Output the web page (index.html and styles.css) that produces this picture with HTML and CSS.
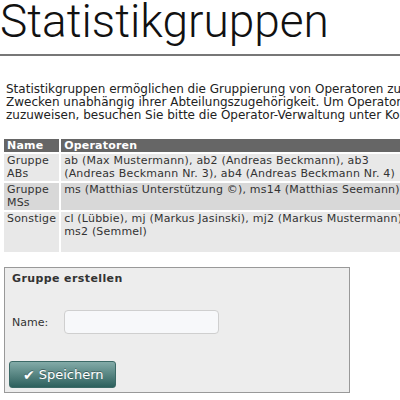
FILE: index.html
```html
<!DOCTYPE html>
<html lang="de">
<head>
    <meta charset="UTF-8">
    <title>Statistikgruppen</title>
    <link rel="stylesheet" href="styles.css">
</head>
<body>
    <h1 class="page-title">Statistikgruppen</h1>
    <div class="content">
        <p class="intro">Statistikgruppen ermöglichen die Gruppierung von Operatoren zu statistischen<br>
        Zwecken unabhängig ihrer Abteilungszugehörigkeit. Um Operatoren einer Gruppe<br>
        zuzuweisen, besuchen Sie bitte die Operator-Verwaltung unter Konfiguration.</p>

        <table class="groups">
            <thead>
                <tr><th>Name</th><th>Operatoren</th></tr>
            </thead>
            <tbody>
                <tr>
                    <td class="name">Gruppe ABs</td>
                    <td class="ops">ab (Max Mustermann), ab2 (Andreas Beckmann), ab3<br>(Andreas Beckmann Nr. 3), ab4 (Andreas Beckmann Nr. 4)</td>
                </tr>
                <tr class="alt">
                    <td class="name">Gruppe MSs</td>
                    <td class="ops">ms (Matthias Unterstützung ©), ms14 (Matthias Seemann)</td>
                </tr>
                <tr class="last">
                    <td class="name">Sonstige</td>
                    <td class="ops">cl (Lübbie), mj (Markus Jasinski), mj2 (Markus Mustermann),<br>ms2 (Semmel)</td>
                </tr>
            </tbody>
        </table>

        <form class="box">
            <h3>Gruppe erstellen</h3>
            <div class="form-row">
                <label for="groupName">Name:</label>
                <input type="text" id="groupName" name="groupName">
            </div>
            <button type="submit" class="btn-save"><span class="check">✔</span>Speichern</button>
        </form>
    </div>
</body>
</html>
```

FILE: styles.css
```css
html {
    overflow: hidden;
}
body {
    margin: 0;
    font-family: "DejaVu Sans", Verdana, sans-serif;
    font-size: 11px;
    line-height: 13px;
    color: #222;
    background-color: white;
}
.page-title {
    margin: 0;
    padding: 0 0 12px 0;
    font-family: Roboto, "Liberation Sans", sans-serif;
    font-weight: 300;
    font-size: 46px;
    line-height: 42px;
    color: #111;
    border-bottom: 2px solid #777;
    white-space: nowrap;
}
.content {
    padding: 0 4px;
    width: 700px;
}
.intro {
    margin: 27px 0 15px 2px;
    font-size: 12px;
    white-space: nowrap;
}
.groups {
    border-spacing: 2px;
    margin-left: -2px;
    width: 640px;
    color: #333;
    letter-spacing: 0.2px;
}
.groups th {
    background-color: #666;
    color: white;
    font-weight: bold;
    text-align: left;
    padding: 0 3px;
}
.groups td {
    background-color: #e8e8e8;
    padding: 0 3px 1px 3px;
    vertical-align: top;
}
.groups tr.alt td {
    background-color: #d8d8d8;
}
.groups tr.last td {
    padding-bottom: 14px;
}
.groups td.name {
    width: 1px;
}
.groups td.ops {
    white-space: nowrap;
}
.box {
    margin-top: 13px;
    width: 336px;
    padding: 4px;
    border: 1px solid #999;
    background-color: #ededed;
}
.box h3 {
    margin: 0;
    padding: 0 3px;
    font-size: 11px;
    line-height: 13px;
    letter-spacing: 0.4px;
    color: #333;
}
.form-row {
    display: flex;
    align-items: center;
    margin-top: 25px;
    padding-left: 3px;
}
.form-row label {
    width: 52px;
    color: #333;
}
.form-row input {
    width: 155px;
    height: 24px;
    box-sizing: border-box;
    border: 1px solid #cfcfcf;
    border-radius: 4px;
    background-color: #f7f8fa;
}
.btn-save {
    margin-top: 27px;
    display: flex;
    align-items: center;
    width: 107px;
    height: 27px;
    padding: 0 0 0 13px;
    border: 1px solid #3c6a67;
    border-radius: 3px;
    background: linear-gradient(#83aba8, #2d605d);
    color: white;
    font-family: "DejaVu Sans", Verdana, sans-serif;
    font-size: 13px;
    text-shadow: 0 -1px 0 rgba(0, 0, 0, 0.35);
    cursor: pointer;
}
.btn-save .check {
    font-size: 14px;
    margin-right: 4px;
}
```
